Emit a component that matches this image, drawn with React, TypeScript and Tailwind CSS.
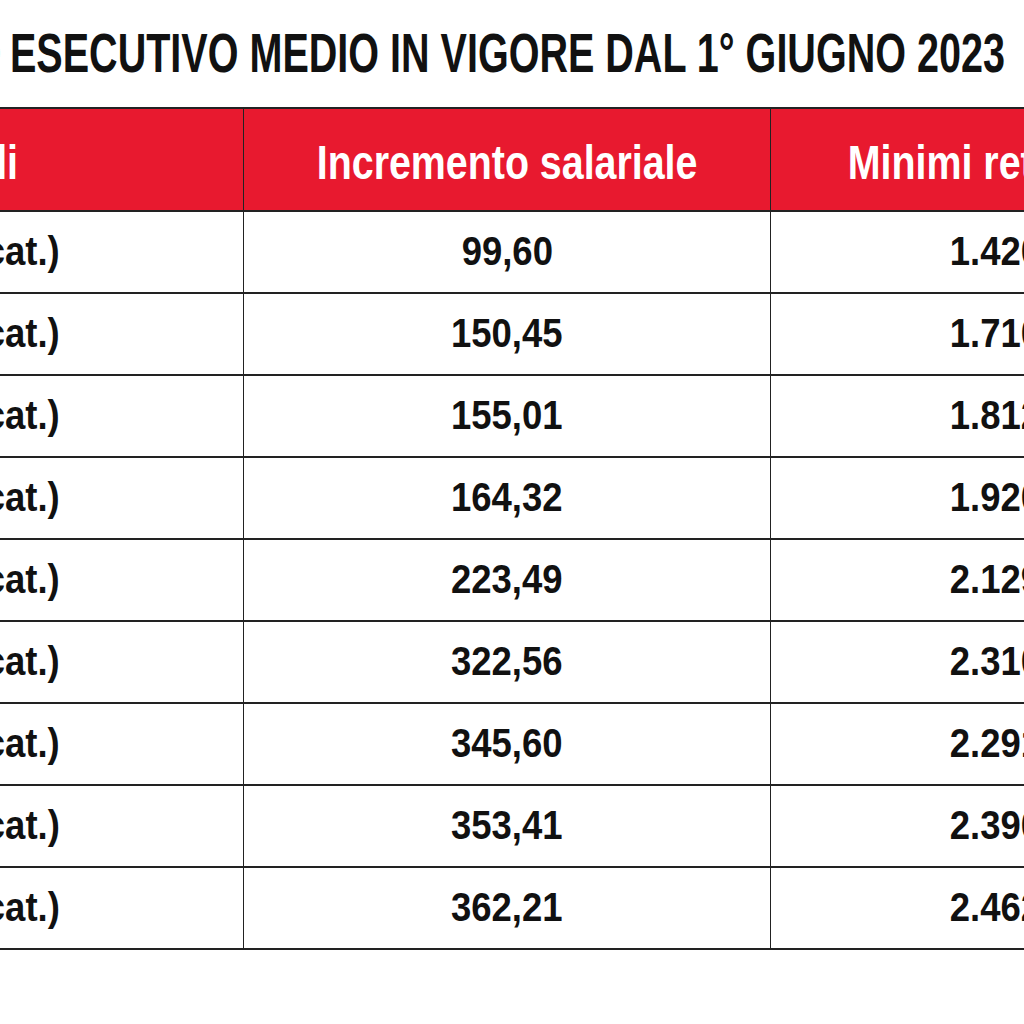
import React from "react";

const rows = [
  { level: "Livello 7 (1ª cat.)", increment: "99,60", minimum: "1.420,94" },
  { level: "Livello 6 (2ª cat.)", increment: "150,45", minimum: "1.710,55" },
  { level: "Livello 5 (3ª cat.)", increment: "155,01", minimum: "1.812,27" },
  { level: "Livello 4 (4ª cat.)", increment: "164,32", minimum: "1.920,06" },
  { level: "Livello 3 (5ª cat.)", increment: "223,49", minimum: "2.129,81" },
  { level: "Livello 2 (6ª cat.)", increment: "322,56", minimum: "2.310,48" },
  { level: "Livello 1 (7ª cat.)", increment: "345,60", minimum: "2.291,17" },
  { level: "Quadri (8ª cat.)", increment: "353,41", minimum: "2.390,62" },
  { level: "Quadri (9ª cat.)", increment: "362,21", minimum: "2.462,38" },
];

// Arial Narrow is not installed, so Liberation Sans is squeezed to narrow width
const narrowHead = "inline-block whitespace-nowrap scale-x-[0.82]";
const narrowCell = "inline-block whitespace-nowrap scale-x-[0.89]";

export default function App() {
  return (
    <div className="w-[1024px] h-[1024px] overflow-hidden bg-white text-[#111] font-['Liberation_Sans',Arial,sans-serif]">
      <div className="flex h-[107px] items-center pb-[2px] text-[56px] font-bold leading-none">
        <div className="flex w-[1px] shrink-0 justify-end">
          <span className="inline-block whitespace-nowrap origin-right scale-x-[0.706]">CONTRATTO</span>
        </div>
        <h1 className="ml-[9px] inline-block whitespace-nowrap origin-left scale-x-[0.706]">
          ESECUTIVO MEDIO IN VIGORE DAL 1° GIUGNO 2023
        </h1>
      </div>

      <div className="w-[1270px] border-t-2 border-b-2 border-[#222]">
        <div className="grid h-[101px] grid-cols-[243px_527px_500px] bg-[#e8192f] text-[48px] font-bold text-white">
          <div className="flex items-center justify-end pt-[6px] pr-[225px]">
            <span className={`${narrowHead} origin-right`}>Livelli</span>
          </div>
          <div className="flex items-center justify-center border-l border-[#222] pt-[6px]">
            <span className={narrowHead}>Incremento salariale</span>
          </div>
          <div className="flex items-center justify-center border-l border-[#222] pt-[6px] pr-[28px]">
            <span className={narrowHead}>Minimi retributivi</span>
          </div>
        </div>

        {rows.map((row) => (
          <div
            key={row.level}
            className="grid h-[82px] grid-cols-[243px_527px_500px] border-t-2 border-[#222] text-[41px] font-bold"
          >
            <div className="flex items-center justify-end pr-[183px]">
              <span className={`${narrowCell} origin-right`}>{row.level}</span>
            </div>
            <div className="flex items-center justify-center border-l border-[#222]">
              <span className={narrowCell}>{row.increment}</span>
            </div>
            <div className="flex items-center justify-center border-l border-[#222]">
              <span className={narrowCell}>{row.minimum}</span>
            </div>
          </div>
        ))}
      </div>
    </div>
  );
}
